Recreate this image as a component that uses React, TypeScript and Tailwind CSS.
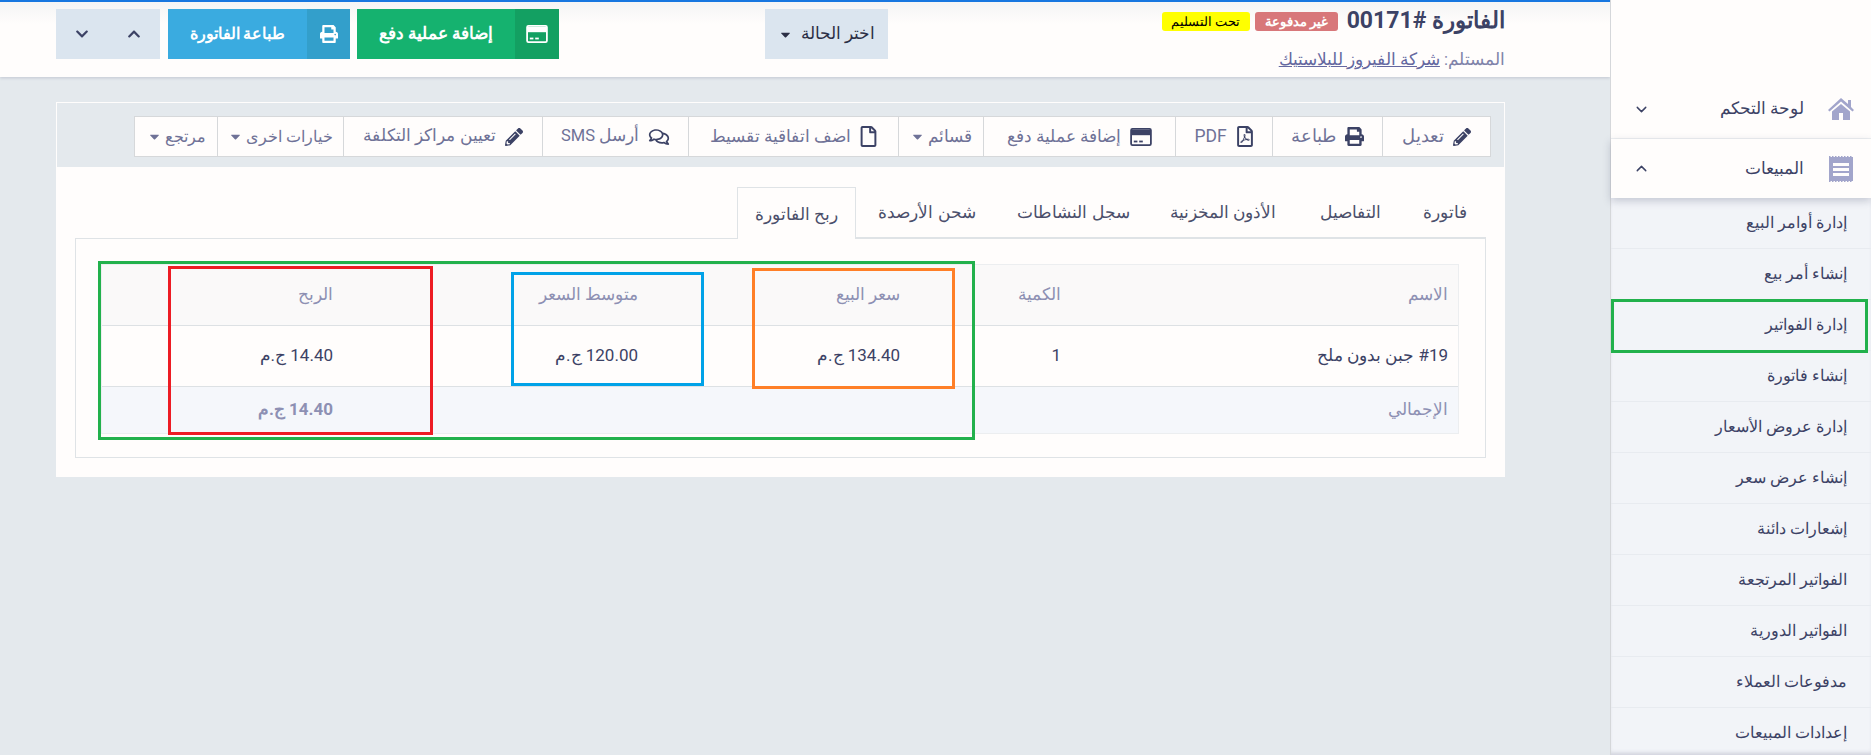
import React from "react";
import { FaPencilAlt, FaPrint, FaRegFilePdf, FaRegFile, FaRegComments, FaChevronUp, FaChevronDown, FaCaretDown } from "react-icons/fa";
import { ChevronDown, ChevronUp } from "lucide-react";

function Card({ className = "" }: { className?: string }) {
  return (
    <svg viewBox="0 0 24 20" className={className} fill="none">
      <rect x="1" y="1" width="22" height="18" rx="1.5" stroke="currentColor" strokeWidth="2" />
      <rect x="1" y="2" width="22" height="6" fill="currentColor" />
      <rect x="4" y="14" width="4" height="2" fill="currentColor" />
      <rect x="10" y="14" width="4" height="2" fill="currentColor" />
    </svg>
  );
}

function HomeIcon() {
  return (
    <svg viewBox="0 0 26 22" className="w-[26px] h-[22px] shrink-0" fill="#a2a5cb">
      <path d="M13 0 L20 6 V2 h3 v7 L26 12 L24.5 13.5 L13 3.5 L1.5 13.5 L0 12Z" />
      <path d="M13 6 L22 13.5 V22 H15 V15 H11 V22 H4 V13.5Z" />
    </svg>
  );
}

function SalesIcon() {
  return (
    <svg viewBox="0 0 24 26" className="w-6 h-[26px] shrink-0">
      <rect x="0" y="1" width="24" height="24" fill="#a2a5cb" />
      <path d="M0 .5h24M0 25.5h24" stroke="#a2a5cb" strokeWidth="1" strokeDasharray="1.5 1.5" />
      <rect x="4" y="7" width="16" height="3" fill="#fffdfc" />
      <rect x="4" y="12" width="16" height="3" fill="#fffdfc" />
      <rect x="4" y="17" width="16" height="3" fill="#fffdfc" />
    </svg>
  );
}

const tools: { label: string; width: string; size: string; icon?: React.ReactNode; caret?: boolean }[] = [
  { label: "تعديل", width: "w-[107px]", size: "text-[17.5px]", icon: <FaPencilAlt className="w-[18px] h-[18px] text-[#3c4265] shrink-0" /> },
  { label: "طباعة", width: "w-[110px]", size: "text-[17.5px]", icon: <FaPrint className="w-[19px] h-[19px] text-[#3c4265] shrink-0" /> },
  { label: "PDF", width: "w-[97px]", size: "text-[17.5px]", icon: <FaRegFilePdf className="w-[18px] h-[21px] text-[#3c4265] shrink-0" /> },
  { label: "إضافة عملية دفع", width: "w-[192px]", size: "text-[17px]", icon: <Card className="w-[22px] h-[18px] text-[#3c4265] shrink-0" /> },
  { label: "قسائم", width: "w-[85px]", size: "text-[17px]", caret: true },
  { label: "اضف اتفاقية تقسيط", width: "w-[210px]", size: "text-[17px]", icon: <FaRegFile className="w-[17px] h-[21px] text-[#3c4265] shrink-0" /> },
  { label: "أرسل SMS", width: "w-[146px]", size: "text-[16.5px]", icon: <FaRegComments className="w-[22px] h-[18px] text-[#3c4265] shrink-0" /> },
  { label: "تعيين مراكز التكلفة", width: "w-[199px]", size: "text-[16.5px]", icon: <FaPencilAlt className="w-[18px] h-[18px] text-[#3c4265] shrink-0" /> },
  { label: "خيارات اخرى", width: "w-[126px]", size: "text-[16px]", caret: true },
  { label: "مرتجع", width: "w-[83px]", size: "text-[16px]", caret: true },
];

const tabs = [
  { label: "فاتورة", width: "w-[83px]" },
  { label: "التفاصيل", width: "w-[106px]" },
  { label: "الأذون المخزنية", width: "w-[148px]" },
  { label: "سجل النشاطات", width: "w-[151px]" },
  { label: "شحن الأرصدة", width: "w-[142px]" },
];

const subs = [
  "إدارة أوامر البيع",
  "إنشاء أمر بيع",
  "إدارة الفواتير",
  "إنشاء فاتورة",
  "إدارة عروض الأسعار",
  "إنشاء عرض سعر",
  "إشعارات دائنة",
  "الفواتير المرتجعة",
  "الفواتير الدورية",
  "مدفوعات العملاء",
  "إعدادات المبيعات",
];

const colName = "w-[387px] shrink-0 pr-[10px] pl-[12px]";
const colQty = "w-[161px] shrink-0 pr-[10px] pl-[12px]";
const colSale = "w-[262px] shrink-0 pr-[10px] pl-[12px]";
const colAvg = "w-[305px] shrink-0 pr-[10px] pl-[12px]";
const colProfit = "w-[243px] shrink-0 pr-[10px] pl-[12px]";

export default function App() {
  return (
    <div dir="rtl" className="relative flex w-[1871px] h-[755px] overflow-hidden bg-[#e4e9ed] font-[Roboto,'Noto_Sans',sans-serif] text-[15px] text-[#3c4265]">
      {/* sidebar */}
      <aside className="relative z-10 w-[261px] h-[755px] shrink-0 bg-[#fffdfc] border-l border-[#d5d7da] flex flex-col">
        <div className="h-[80px] shrink-0" />
        <div className="h-[59px] shrink-0 flex items-center pr-[17px] pl-[22px] border-b border-[#eef0f2]">
          <HomeIcon />
          <span className="mr-[24px] text-[17px] font-medium flex-1">لوحة التحكم</span>
          <ChevronDown className="w-[17px] h-[17px]" />
        </div>
        <div className="h-[59px] shrink-0 flex items-center pr-[18px] pl-[22px] shadow-[0_3px_8px_rgba(60,66,101,0.25)] relative">
          <SalesIcon />
          <span className="mr-[25px] text-[17px] font-medium flex-1">المبيعات</span>
          <ChevronUp className="w-[17px] h-[17px]" />
        </div>
        <div className="flex-1 min-h-0 bg-[#f2f4f8] overflow-hidden shadow-[inset_0_-4px_4px_-2px_rgba(60,66,101,0.2)]">
          {subs.map((s) => (
            <div key={s} className="h-[51px] flex items-center pr-[24px] border-b border-[#e8ebf0] text-[16px] font-medium">
              {s}
            </div>
          ))}
        </div>
      </aside>

      {/* main */}
      <main className="flex-1 flex flex-col min-w-0">
        <header className="relative h-[77px] shrink-0 border-t-2 border-[#1877e0] bg-gradient-to-b from-[#f5f5f5] to-[#fffdfc] to-30% shadow-[0_1px_3px_rgba(60,66,101,0.2)] flex items-start pr-[105px]">
          <div className="w-[617px] shrink-0">
            <div className="flex items-center h-[36px]">
              <h1 className="text-[23px] font-bold text-[#3c4265] leading-none">الفاتورة #00171</h1>
              <span className="mr-[9px] mt-[3px] w-[83px] h-[19px] rounded-[3px] bg-[#d8777a] text-white text-[13px] font-bold flex items-center justify-center">غير مدفوعة</span>
              <span className="mr-[5px] mt-[3px] w-[88px] h-[19px] rounded-[3px] bg-[#ffff00] text-black text-[13px] font-medium flex items-center justify-center">تحت التسليم</span>
            </div>
            <div className="mt-[10px] text-[16.5px] text-[#8083a9] leading-[24px]">
              المستلم: <a className="underline text-[#6568a0]">شركة الفيروز للبلاستيك</a>
            </div>
          </div>
          <button className="mt-[7px] w-[123px] h-[50px] shrink-0 bg-[#dbe5ef] text-[#2b2f45] text-[17px] font-medium flex items-center justify-center gap-2">
            اختر الحالة <FaCaretDown className="w-[15px] h-[15px]" />
          </button>
          <div className="mr-[206px] mt-[7px] flex">
            <button className="w-[202px] h-[50px] bg-[#15b26f] text-white font-bold text-[17px] flex items-center">
              <span className="w-[44px] h-full bg-[#13a062] flex items-center justify-center shrink-0"><Card className="w-[22px] h-[18px]" /></span>
              <span className="flex-1 text-center">إضافة عملية دفع</span>
            </button>
            <button className="mr-[7px] w-[182px] h-[50px] bg-[#3aabe0] text-white font-bold text-[16px] flex items-center">
              <span className="w-[43px] h-full bg-[#339fcb] flex items-center justify-center shrink-0"><FaPrint className="w-[18px] h-[18px]" /></span>
              <span className="flex-1 text-center">طباعة الفاتورة</span>
            </button>
            <div className="mr-[8px] w-[104px] h-[50px] bg-[#dbe5ef] flex items-center text-[#3c4265]">
              <span className="w-1/2 flex justify-center"><FaChevronUp className="w-[14px] h-[14px]" /></span>
              <span className="w-1/2 flex justify-center"><FaChevronDown className="w-[14px] h-[14px]" /></span>
            </div>
          </div>
        </header>

        <section className="mt-[25px] mr-[105px] ml-[56px] h-[375px] bg-[#fffdfc] flex flex-col">
          <div className="h-[66px] border border-[#fffdfc] bg-[#e4e9ed] pt-[13px] pr-[13px]">
            <div className="flex h-[41px] w-fit bg-[#fffdfc] border border-[#d6d8da]">
              {tools.map((t, i) => (
                <div key={t.label} className={`${t.width} ${t.size} h-full flex items-center justify-center gap-[9px] text-[#6f7297] ${i > 0 ? "border-r border-[#d6d8da]" : ""}`}>
                  {t.icon}
                  <span>{t.label}</span>
                  {t.caret && <FaCaretDown className="w-[15px] h-[15px] -mr-[6px]" />}
                </div>
              ))}
            </div>
          </div>

          <div className="mt-[19px] mr-[19px] flex h-[51px] relative z-[1]">
            {tabs.map((t) => (
              <div key={t.label} className={`${t.width} pt-[2px] flex items-center justify-center text-[17px] text-[#4b4f6b] border-b border-[#dfe3e6]`}>
                {t.label}
              </div>
            ))}
            <div className="w-[119px] h-[52px] pt-[2px] flex items-center justify-center text-[17px] text-[#4b4f6b] bg-[#fffdfc] border border-b-0 border-[#dfe3e6]">
              ربح الفاتورة
            </div>
          </div>
          <div className="mr-[19px] w-[1411px] h-[220px] border border-[#dfe3e6] pt-[25px] pr-[26px]">
            <div className="w-[1358px] border border-[#eceef0]">
              <div className="flex h-[61px] items-center bg-[#faf9f9] border-b border-[#dde1e4] text-[#8d90b3] text-[17px]">
                <div className={colName}>الاسم</div>
                <div className={colQty}>الكمية</div>
                <div className={colSale}>سعر البيع</div>
                <div className={colAvg}>متوسط السعر</div>
                <div className={colProfit}>الربح</div>
              </div>
              <div className="flex h-[61px] items-center border-b border-[#dde1e4] text-[#3c4265] text-[17px]">
                <div className={colName}>#19 جبن بدون ملح</div>
                <div className={colQty}>1</div>
                <div className={colSale}>134.40 ج.م</div>
                <div className={colAvg}>120.00 ج.م</div>
                <div className={colProfit}>14.40 ج.م</div>
              </div>
              <div className="flex h-[46px] items-center bg-[#f5f7fb] text-[#8d90b3] text-[17px]">
                <div className={colName}>الإجمالي</div>
                <div className={colQty} />
                <div className={colSale} />
                <div className={colAvg} />
                <div className={`${colProfit} font-bold`}>14.40 ج.م</div>
              </div>
            </div>
          </div>
        </section>
      </main>

      {/* annotation frames drawn over the screenshot */}
      <div className="absolute left-[98px] top-[261px] w-[877px] h-[179px] border-[3px] border-[#22b14c] z-20" />
      <div className="absolute left-[168px] top-[266px] w-[265px] h-[169px] border-[3px] border-[#ed1c24] z-20" />
      <div className="absolute left-[511px] top-[272px] w-[193px] h-[114px] border-[3px] border-[#00a2e8] z-20" />
      <div className="absolute left-[752px] top-[268px] w-[203px] h-[121px] border-[3px] border-[#ff7f27] z-20" />
      <div className="absolute left-[1611px] top-[299px] w-[257px] h-[54px] border-[3px] border-[#22b14c] z-20" />
    </div>
  );
}
